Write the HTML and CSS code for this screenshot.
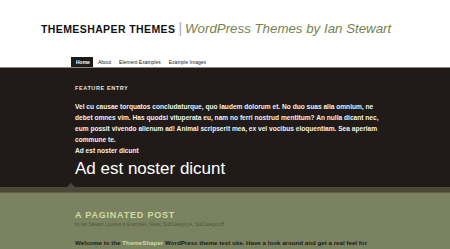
FILE: index.html
```html
<!DOCTYPE html>
<html>
<head>
<meta charset="utf-8">
<link rel="stylesheet" href="styles.css">
</head>
<body>
<header class="masthead">
  <h1 class="site-title">THEMESHAPER THEMES</h1>
  <span class="sep">|</span>
  <span class="tagline">WordPress Themes by Ian Stewart</span>
</header>
<nav class="menu">
  <a class="tab current">Home</a>
  <a class="tab">About</a>
  <a class="tab">Element Examples</a>
  <a class="tab">Example Images</a>
</nav>
<section class="feature">
  <div class="feature-inner">
    <div class="feature-label">FEATURE ENTRY</div>
    <p class="feature-text">Vel cu causae torquatos concludaturque, quo laudem dolorum et. No duo suas alia omnium, ne debet omnes vim. Has quodsi vituperata eu, nam no ferri nostrud mentitum? An nulla dicant nec, eum possit vivendo alienum ad! Animal scripserit mea, ex vel vocibus eloquentiam. Sea aperiam commune te.<br>Ad est noster dicunt</p>
    <h2 class="feature-title">Ad est noster dicunt</h2>
  </div>
  <span class="notch-up"></span>
</section>
<div class="band"></div>
<main class="posts">
  <h2 class="post-title">A PAGINATED POST</h2>
  <div class="byline">by Ian Stewart | posted in Examples, News, SubCategoryA, SubCategoryB</div>
  <p class="post-text">Welcome to the <span class="hl">ThemeShaper</span> WordPress theme test site. Have a look around and get a real feel for</p>
</main>
</body>
</html>
```
FILE: styles.css
```css
html, body {
  margin: 0;
  padding: 0;
  background: #ffffff;
  font-family: "Liberation Sans", Arial, sans-serif;
  overflow: hidden;
}
.masthead {
  display: flex;
  align-items: baseline;
  padding: 20px 0 0 41px;
  height: 36px;
  box-sizing: border-box;
}
.site-title {
  margin: 0;
  font-size: 10.5px;
  font-weight: bold;
  letter-spacing: 0.4px;
  color: #111;
}
.sep {
  color: #aaa;
  font-size: 14px;
  margin: 0 3px 0 3px;
}
.tagline {
  font-style: italic;
  font-size: 13.3px;
  color: #74824f;
}
.menu {
  display: flex;
  align-items: flex-end;
  padding: 21px 0 0 71px;
  height: 31px;
  box-sizing: border-box;
}
.tab {
  font-size: 5px;
  color: #222;
  padding: 2px 4px;
  position: relative;
  line-height: 6px;
}
.tab.current {
  background: #1e1a17;
  color: #fff;
  padding: 2px 5px;
  width: 12px;
  font-weight: bold;
  margin-right: 1px;
}
.tab.current::after {
  content: "";
  position: absolute;
  left: 8px;
  bottom: -4px;
  border-left: 3px solid transparent;
  border-right: 3px solid transparent;
  border-top: 4px solid #1e1a17;
}
.feature {
  position: relative;
  background: #201b18;
  border-top: 1px solid #8a8784;
  height: 120px;
  box-sizing: border-box;
}
.feature-inner {
  padding: 17px 0 0 75px;
  width: 305px;
}
.feature-label {
  font-size: 5.5px;
  font-weight: bold;
  letter-spacing: 0.6px;
  color: #e6e2dc;
}
.feature-text {
  margin: 10px 0 0;
  font-size: 6.6px;
  font-weight: bold;
  line-height: 11px;
  color: #f4f2ee;
}
.feature-title {
  margin: 3px 0 0;
  font-weight: normal;
  font-size: 17px;
  color: #fff;
}
.notch-up {
  position: absolute;
  left: 67px;
  bottom: 0;
  border-left: 4px solid transparent;
  border-right: 4px solid transparent;
  border-bottom: 4px solid #49463a;
}
.band {
  height: 5px;
  background: #4a4839;
  border-bottom: 1px solid #5e604a;
}
.posts {
  background: #7b8261;
  padding: 17px 0 10px 75px;
  height: 60px;
}
.post-title {
  margin: 0;
  font-size: 9px;
  letter-spacing: 0.8px;
  color: #cfdc9c;
}
.byline {
  font-size: 4.5px;
  color: #4f553c;
  margin-top: 2px;
}
.post-text {
  margin: 12px 0 0;
  font-size: 6.2px;
  font-weight: bold;
  color: #1b1c14;
}
.hl {
  color: #cfdc9c;
}
```
